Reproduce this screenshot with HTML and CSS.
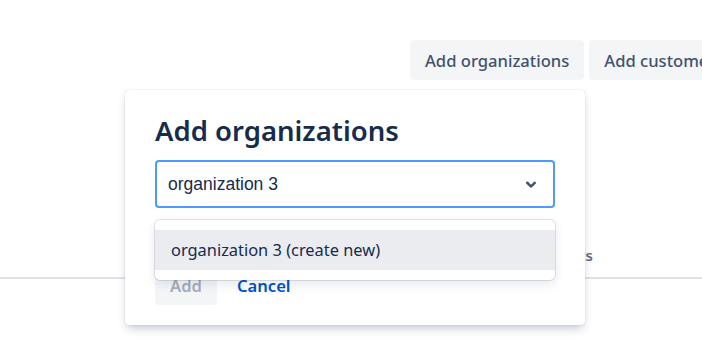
FILE: index.html
```html
<!DOCTYPE html>
<html lang="en">
<head>
  <meta charset="UTF-8">
  <title>Organizations</title>
  <link rel="stylesheet" href="styles.css">
</head>
<body>

  <!-- Page behind the popup -->
  <div class="toolbar">
    <button class="btn">Add organizations</button>
    <button class="btn">Add customers</button>
  </div>

  <div class="table-head">
    <span class="th th-name"></span>
    <span class="th th-count">Requests</span>
  </div>

  <!-- Inline dialog opened from "Add organizations" -->
  <div class="dialog">
    <h2 class="dialog-title">Add organizations</h2>

    <div class="select">
      <div class="select-control">
        <span class="select-value">organization 3</span>
        <svg class="chevron" width="30" height="30" viewBox="0 0 24 24">
          <path fill="currentColor" d="M8.292 10.293a1.009 1.009 0 0 0 0 1.419l2.939 2.965c.218.215.5.322.779.322s.556-.107.769-.322l2.93-2.955a1.01 1.01 0 0 0 0-1.419.987.987 0 0 0-1.406 0l-2.298 2.317-2.307-2.327a.99.99 0 0 0-1.406 0z"/>
        </svg>
      </div>

      <div class="menu">
        <div class="option is-focused">organization 3 (create new)</div>
      </div>
    </div>

    <div class="dialog-footer">
      <button class="btn btn-disabled" disabled>Add</button>
      <button class="btn btn-link">Cancel</button>
    </div>
  </div>

</body>
</html>
```

FILE: styles.css
```css
body {
  margin: 0;
  background: #fff;
  color: #172b4d;
  font-family: "Noto Sans", "Open Sans", sans-serif;
  font-size: 17px;
  overflow: hidden;
}

button {
  font-family: inherit;
}

.toolbar {
  display: flex;
  gap: 5px;
  padding: 40px 0 0 410px;
  white-space: nowrap;
}

.btn {
  height: 40px;
  padding: 0 15px;
  border: none;
  border-radius: 4px;
  background: #f4f5f7;
  color: #42526e;
  font-size: 16.6px;
  font-weight: 500;
  cursor: pointer;
  flex-shrink: 0;
}

.table-head {
  display: flex;
  margin-top: 165px;
  padding-bottom: 12px;
  border-bottom: 2px solid #dfe1e6;
}

.th {
  color: #5e6c84;
  font-size: 15px;
  font-weight: 600;
}

.th-name {
  width: 440px;
}

.th-count {
  width: 153px;
  text-align: right;
}

.dialog {
  position: absolute;
  top: 90px;
  left: 125px;
  width: 400px;
  padding: 24px 30px 20px;
  background: #fff;
  border-radius: 4px;
  box-shadow: 0 5px 10px -2px rgba(9, 30, 66, 0.25),
              0 0 1px rgba(9, 30, 66, 0.31);
}

.dialog-title {
  margin: 0 0 12px;
  font-size: 27.5px;
  line-height: 34px;
  font-weight: 600;
  color: #172b4d;
}

.select {
  position: relative;
}

.select-control {
  display: flex;
  align-items: center;
  height: 44px;
  padding: 0 7px 0 11px;
  border: 2px solid #4c9aff;
  border-radius: 4px;
}

.select-value {
  flex: 1;
  font-family: "Liberation Sans", Arial, sans-serif;
  font-size: 17.5px;
  color: #172b4d;
}

.chevron {
  color: #42526e;
}

.menu {
  position: absolute;
  top: calc(100% + 12px);
  left: 0;
  right: 0;
  padding: 10px 0;
  background: #fff;
  border-radius: 5px;
  box-shadow: 0 0 0 1px rgba(9, 30, 66, 0.12),
              0 4px 11px rgba(9, 30, 66, 0.1);
}

.option {
  height: 40px;
  line-height: 40px;
  padding: 0 16px;
  font-size: 16.4px;
  color: #172b4d;
}

.option.is-focused {
  background: #ebecf0;
}

.dialog-footer {
  display: flex;
  gap: 5px;
  margin-top: 57px;
}

.btn-disabled {
  background: #f4f5f7;
  color: #a5adba;
  font-weight: 600;
  cursor: not-allowed;
}

.btn-link {
  background: transparent;
  color: #0052cc;
  font-weight: 600;
}
```
